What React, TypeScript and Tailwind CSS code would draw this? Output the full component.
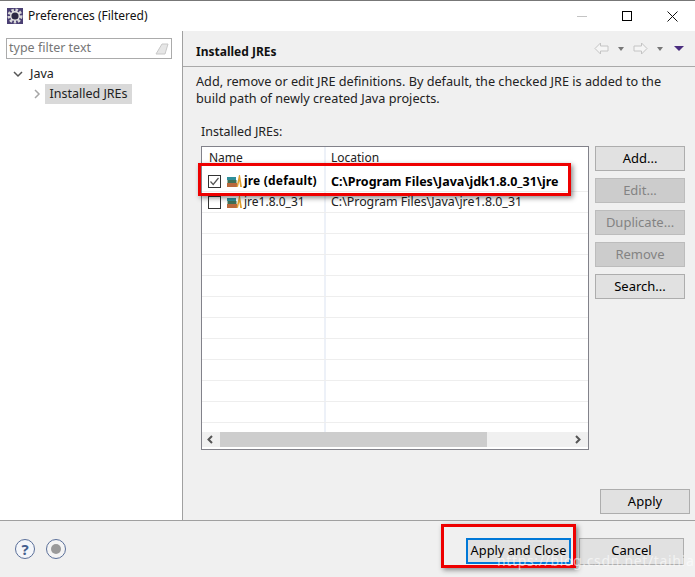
const font = { fontFamily: '"Noto Sans", "Open Sans", sans-serif' };

const JarIcon = () => (
  <svg width="15" height="16" viewBox="0 0 15 16" className="shrink-0">
    <rect x="0" y="4" width="9" height="3" fill="#2f8f9a" />
    <rect x="0.5" y="7" width="9" height="3" fill="#3f6f55" />
    <rect x="0" y="10" width="10" height="4" fill="#b9683c" />
    <path d="M9.5 13.5 L12 2 L13 2 L15 14 L13.2 14 L12.3 8 L11 14 Z" fill="#e0a030" />
  </svg>
);

const SideButton = ({ label, disabled }: { label: string; disabled?: boolean }) => (
  <button
    className={
      disabled
        ? "w-[90px] h-[25px] pb-[2px] border border-[#bcbcbc] bg-[#cccccc] text-[#838383] text-[13px] leading-[20px]"
        : "w-[90px] h-[25px] pb-[2px] border border-[#adadad] bg-[#e1e1e1] text-black text-[13px] leading-[20px]"
    }
  >
    {label}
  </button>
);

const Row = ({ name, location, bold, checked }: { name?: string; location?: string; bold?: boolean; checked?: boolean }) => (
  <div className="flex h-[21px] border-b border-[#eeeeee] shrink-0">
    <div className="w-[122px] shrink-0 flex items-center pl-[6px] gap-[2px]">
      {name && (
        <>
          <div className="w-[13px] h-[13px] border border-[#333333] bg-white flex items-center justify-center mr-[4px] shrink-0">
            {checked && (
              <svg width="11" height="11" viewBox="0 0 11 11">
                <path d="M1.5 5.5 L4.2 8.5 L9.5 2" fill="none" stroke="#555555" strokeWidth="1.2" />
              </svg>
            )}
          </div>
          <JarIcon />
          <span className={bold ? "font-bold text-black text-[12px] tracking-[0.2px] whitespace-nowrap" : "text-[#222222] text-[12px] whitespace-nowrap"}>{name}</span>
        </>
      )}
    </div>
    <div className="w-[2px] shrink-0 bg-[#edf1f8]" />
    <div className={bold ? "pl-[5px] font-bold text-black text-[12.5px] leading-[21px] whitespace-nowrap" : "pl-[5px] text-[#222222] text-[12.4px] leading-[20px] whitespace-nowrap"}>
      {location}
    </div>
  </div>
);

export default function App() {
  return (
    <div className="relative w-[695px] h-[577px] overflow-hidden bg-white flex flex-col border-t border-[#777777]" style={font}>
      {/* title bar */}
      <div className="h-[30px] shrink-0 flex items-center bg-white pl-[7px]">
        <svg width="16" height="16" viewBox="0 0 16 16" className="shrink-0">
          <rect x="0" y="0" width="16" height="16" fill="#4a3f73" />
          <circle cx="8" cy="8" r="6" fill="none" stroke="#d8d8d8" strokeWidth="3" strokeDasharray="2.4 1.6" />
          <circle cx="8" cy="8" r="5" fill="#e4e4e4" />
          <circle cx="8" cy="8" r="3.6" fill="#2d2a45" />
        </svg>
        <span className="ml-[5px] text-[12px] text-[#111111]">Preferences (Filtered)</span>
        <div className="ml-auto flex items-center">
          <div className="w-[10px] h-px bg-[#c4c4c4] mr-[35px]" />
          <div className="w-[10px] h-[10px] border border-black mr-[35px]" />
          <svg width="11" height="11" viewBox="0 0 11 11" className="mr-[17px]">
            <path d="M0.5 0.5 L10.5 10.5 M10.5 0.5 L0.5 10.5" stroke="#111111" strokeWidth="1" />
          </svg>
        </div>
      </div>

      {/* middle */}
      <div className="flex h-[489px] shrink-0">
        <div className="w-[182px] shrink-0 bg-white pl-[6px] pt-[7px]">
          <div className="w-[166px] h-[21px] border border-[#ababab] flex items-center px-[2px] text-[12.5px] text-[#777777]">
            <span>type filter text</span>
            <svg width="14" height="14" viewBox="0 0 14 14" className="ml-auto">
              <path d="M1 12 L7 2 L13 2 L10 12 Z" fill="#e6e6e6" stroke="#c8c8c8" />
            </svg>
          </div>
          <div className="flex items-center h-[20px] mt-[5px] pl-[7px] text-[12.5px] text-[#222222]">
            <svg width="10" height="10" viewBox="0 0 10 10">
              <path d="M1 3 L5 7 L9 3" fill="none" stroke="#555555" strokeWidth="1.5" />
            </svg>
            <span className="ml-[7px]">Java</span>
          </div>
          <div className="flex items-center h-[20px] pl-[27px]">
            <svg width="8" height="10" viewBox="0 0 8 10">
              <path d="M2 1 L6 5 L2 9" fill="none" stroke="#a6a6a6" strokeWidth="1.5" />
            </svg>
            <span className="ml-[4px] bg-[#d9d9d9] h-[20px] w-[87px] text-center text-[12.5px] leading-[20px] text-[#222222]">Installed JREs</span>
          </div>
        </div>
        <div className="w-px shrink-0 bg-[#a0a0a0]" />

        <div className="flex-1 bg-[#f0f0f0] flex flex-col min-w-0">
          <div className="h-[36px] shrink-0 flex items-center pl-[13px] pt-[6px] border-b border-[#a9a9a9]">
            <span className="font-bold text-[12px] text-[#111111]">Installed JREs</span>
            <div className="ml-auto flex items-center pr-[11px] mb-[6px]">
              <svg width="15" height="13" viewBox="0 0 15 13">
                <path d="M1 6.5 L6.5 1 L6.5 4 L14 4 L14 9 L6.5 9 L6.5 12 Z" fill="#f5f5f5" stroke="#c4c4c4" />
              </svg>
              <div className="ml-[9px] w-0 h-0 border-x-[3.5px] border-x-transparent border-t-[4px] border-t-[#777777]" />
              <svg width="15" height="13" viewBox="0 0 15 13" className="ml-[9px]">
                <path d="M14 6.5 L8.5 1 L8.5 4 L1 4 L1 9 L8.5 9 L8.5 12 Z" fill="#f5f5f5" stroke="#c4c4c4" />
              </svg>
              <div className="ml-[9px] w-0 h-0 border-x-[3.5px] border-x-transparent border-t-[4px] border-t-[#777777]" />
              <div className="ml-[11px] w-0 h-0 border-x-[5px] border-x-transparent border-t-[5px] border-t-[#4a2d7f]" />
            </div>
          </div>

          <div className="pl-[13px] pt-[6px] text-[12.7px] leading-[17px] text-[#222222]">
            <p>Add, remove or edit JRE definitions. By default, the checked JRE is added to the</p>
            <p>build path of newly created Java projects.</p>
          </div>

          <div className="pl-[18px] pt-[16px] text-[12.5px] leading-[17px] text-[#222222]">Installed JREs:</div>

          <div className="flex pl-[18px] pt-[6px]">
            <div className="w-[388px] h-[304px] border border-[#82828a] bg-white flex flex-col shrink-0">
              <div className="flex h-[24px] shrink-0 text-[12px] text-[#222222] leading-[22px]">
                <div className="w-[122px] pl-[7px]">Name</div>
                <div className="w-[2px] bg-[#edf1f8]" />
                <div className="pl-[5px]">Location</div>
              </div>
              <Row name="jre (default)" location="C:\Program Files\Java\jdk1.8.0_31\jre" bold checked />
              <Row name="jre1.8.0_31" location="C:\Program Files\Java\jre1.8.0_31" />
              <Row /><Row /><Row /><Row /><Row /><Row /><Row /><Row /><Row /><Row />
              <div className="flex h-[9px] shrink-0">
                <div className="w-[122px]" />
                <div className="w-[2px] bg-[#edf1f8]" />
              </div>
              <div className="flex h-[15px] shrink-0 items-center bg-[#f0f0f0]">
                <svg width="18" height="15" viewBox="0 0 18 15" className="shrink-0">
                  <path d="M10 4 L6.5 7.5 L10 11" fill="none" stroke="#555555" strokeWidth="2" />
                </svg>
                <div className="w-[267px] h-[15px] bg-[#cdcdcd]" />
                <svg width="18" height="15" viewBox="0 0 18 15" className="ml-auto shrink-0 mr-[1px]">
                  <path d="M7 4 L10.5 7.5 L7 11" fill="none" stroke="#555555" strokeWidth="2" />
                </svg>
              </div>
            </div>
            <div className="flex flex-col gap-[7px] ml-[6px]">
              <SideButton label="Add..." />
              <SideButton label="Edit..." disabled />
              <SideButton label="Duplicate..." disabled />
              <SideButton label="Remove" disabled />
              <SideButton label="Search..." />
            </div>
          </div>

          <div className="flex justify-end mt-auto pb-[6px] pr-[5px]">
            <button className="w-[90px] h-[25px] pb-[2px] border border-[#adadad] bg-[#e1e1e1] text-black text-[13px] leading-[20px]">Apply</button>
          </div>
        </div>
      </div>

      {/* footer */}
      <div className="flex-1 bg-[#f0f0f0] border-t border-[#a0a0a0] flex items-start">
        <div className="flex items-center gap-[11px] pl-[15px] pt-[18px]">
          <div className="w-[20px] h-[20px] rounded-full border border-[#5a6f99] bg-[#f4f6fa] flex items-center justify-center text-[15px] font-bold text-[#44608f] leading-none">?</div>
          <div className="w-[20px] h-[20px] rounded-full border border-[#5a6f99] bg-[#f4f4f4] flex items-center justify-center">
            <div className="w-[10px] h-[10px] rounded-full bg-[#9a9a9a]" />
          </div>
        </div>
        <div className="ml-auto flex gap-[8px] pr-[11px] pt-[17px]">
          <button className="w-[105px] h-[26px] pb-[2px] border-2 border-[#0078d7] bg-[#e1e1e1] text-black text-[12.8px] leading-[20px] whitespace-nowrap">Apply and Close</button>
          <button className="w-[105px] h-[27px] pb-[3px] border border-[#adadad] bg-[#e1e1e1] text-black text-[13px] leading-[20px]">Cancel</button>
        </div>
      </div>

      {/* red annotation boxes drawn over the dialog */}
      <div className="absolute left-[198px] top-[162px] w-[373px] h-[33px] border-[3px] border-[#ee0000] shadow-[2px_2px_5px_rgba(0,0,0,0.45)]" />
      <div className="absolute left-[441px] top-[523px] w-[135px] h-[44px] border-[3px] border-[#ee0000] shadow-[2px_2px_5px_rgba(0,0,0,0.45)]" />

      {/* watermark */}
      <div className="absolute left-[497px] top-[550px] text-[14px] leading-[20px] text-white/60 whitespace-nowrap tracking-[0.65px]">https://blog.csdn.net/taihiao</div>
    </div>
  );
}
